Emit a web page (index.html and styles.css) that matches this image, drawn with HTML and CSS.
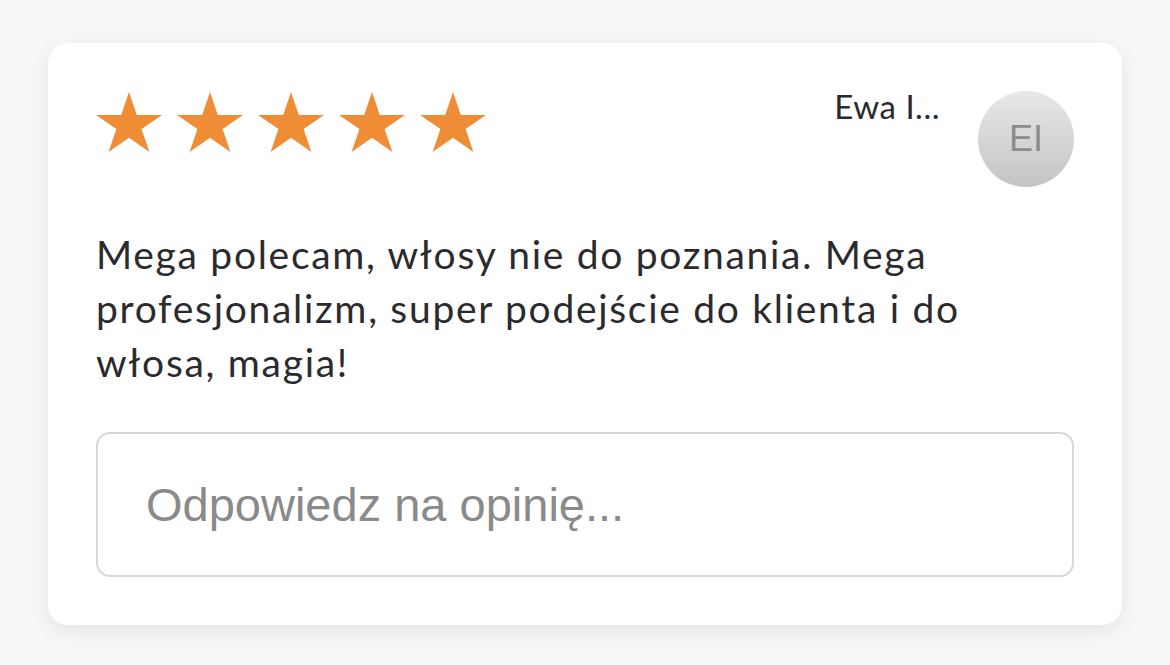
FILE: index.html
```html
<!DOCTYPE html>
<html lang="pl">
<head>
<meta charset="utf-8">
<link rel="stylesheet" href="styles.css">
</head>
<body>
<div class="card">
  <div class="header">
    <div class="stars">
      <svg class="star" viewBox="0 0 190.2 180.9" preserveAspectRatio="none"><polygon points="95.1,0 117.6,69.1 190.2,69.1 131.4,111.8 153.9,180.9 95.1,138.2 36.3,180.9 58.8,111.8 0,69.1 72.6,69.1"/></svg>
      <svg class="star" viewBox="0 0 190.2 180.9" preserveAspectRatio="none"><polygon points="95.1,0 117.6,69.1 190.2,69.1 131.4,111.8 153.9,180.9 95.1,138.2 36.3,180.9 58.8,111.8 0,69.1 72.6,69.1"/></svg>
      <svg class="star" viewBox="0 0 190.2 180.9" preserveAspectRatio="none"><polygon points="95.1,0 117.6,69.1 190.2,69.1 131.4,111.8 153.9,180.9 95.1,138.2 36.3,180.9 58.8,111.8 0,69.1 72.6,69.1"/></svg>
      <svg class="star" viewBox="0 0 190.2 180.9" preserveAspectRatio="none"><polygon points="95.1,0 117.6,69.1 190.2,69.1 131.4,111.8 153.9,180.9 95.1,138.2 36.3,180.9 58.8,111.8 0,69.1 72.6,69.1"/></svg>
      <svg class="star" viewBox="0 0 190.2 180.9" preserveAspectRatio="none"><polygon points="95.1,0 117.6,69.1 190.2,69.1 131.4,111.8 153.9,180.9 95.1,138.2 36.3,180.9 58.8,111.8 0,69.1 72.6,69.1"/></svg>
    </div>
    <div class="author">
      <span class="name">Ewa I...</span>
      <div class="avatar">EI</div>
    </div>
  </div>
  <p class="review">Mega polecam, włosy nie do poznania. Mega profesjonalizm, super podejście do klienta i do włosa, magia!</p>
  <div class="reply">Odpowiedz na opinię...</div>
</div>
</body>
</html>
```
FILE: styles.css
```css
html, body { margin: 0; padding: 0; }
body {
  background: #f7f7f7;
  width: 1170px;
  height: 665px;
  overflow: hidden;
  font-family: "Lato", "Open Sans", sans-serif;
}
.card {
  margin: 43px 0 0 48px;
  width: 1074px;
  height: 582px;
  box-sizing: border-box;
  background: #fff;
  border-radius: 20px;
  box-shadow: 0 6px 20px rgba(0,0,0,0.08);
  padding: 48px;
}
.header {
  display: flex;
  justify-content: space-between;
  align-items: flex-start;
}
.stars {
  display: flex;
  gap: 15px;
}
.star {
  display: block;
  width: 66px;
  height: 60px;
  fill: #ef8c36;
  margin-top: 1px;
}
.author {
  display: flex;
  align-items: flex-start;
  gap: 38px;
}
.name {
  font-size: 33px;
  letter-spacing: 0.5px;
  color: #2a2a2a;
  line-height: 36px;
  margin-top: -3px;
}
.avatar {
  width: 96px;
  height: 96px;
  border-radius: 50%;
  background: linear-gradient(#e8e8e8, #c4c4c4);
  color: #8c8c8c;
  font-family: "Liberation Sans", sans-serif;
  font-size: 36px;
  display: flex;
  align-items: center;
  justify-content: center;
}
.review {
  margin: 40px 0 0 0;
  font-size: 39px;
  letter-spacing: 1.7px;
  line-height: 54px;
  color: #2b2b2e;
}
.reply {
  margin-top: 43px;
  height: 145px;
  box-sizing: border-box;
  border: 2px solid #d8d8d8;
  border-radius: 14px;
  padding: 0 0 0 48px;
  display: flex;
  align-items: center;
  font-family: "Liberation Sans", sans-serif;
  font-size: 47px;
  color: #8a8a8a;
}
```
